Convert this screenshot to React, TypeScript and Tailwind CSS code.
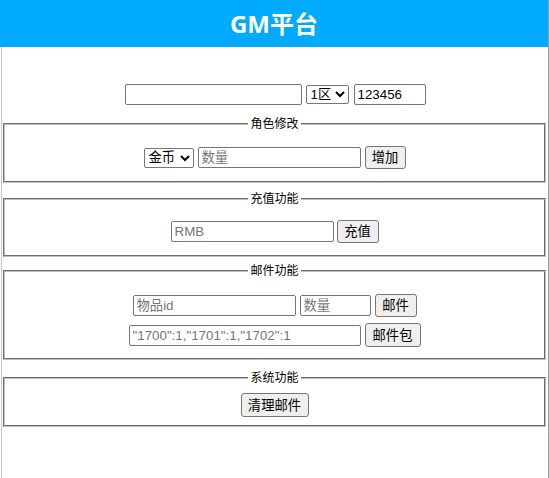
import React from "react";

const font = { fontFamily: '"Liberation Sans", "Noto Sans CJK SC", sans-serif' };

const inputCls =
  "h-[21px] border border-[#767676] rounded-[2px] bg-white px-[3px] text-[13.33px] leading-[15px] text-black placeholder:text-[#757575] outline-none";
const selectCls =
  "border border-[#767676] rounded-[2px] bg-white text-[13.33px] leading-[15px] text-black outline-none";
const btnCls =
  "border border-[#767676] rounded-[3px] bg-[#efefef] text-[13.33px] leading-[15px] text-black flex items-center justify-center";

function Box({
  title,
  className,
  children,
}: {
  title: string;
  className: string;
  children: React.ReactNode;
}) {
  return (
    <fieldset
      className={`ml-[1px] mr-[2px] border-2 [border-style:groove] border-[#c0c0c0] px-[10px] ${className}`}
    >
      <legend className="mx-auto px-[2px] text-[12px] leading-[16px] text-black">{title}</legend>
      {children}
    </fieldset>
  );
}

export default function App() {
  return (
    <div className="w-[549px] min-h-[478px] border-r border-[#9a9a9a] bg-white flex flex-col" style={font}>
      <div className="h-[47px] bg-[#00aaff] flex items-center justify-center">
        <h1 className="text-white text-[24px] font-bold leading-[30px]" style={{ fontFamily: '"Open Sans", "Noto Sans CJK SC", sans-serif' }}>
          GM平台
        </h1>
      </div>
      <div className="ml-[1px] flex-1 border-l border-[#c8c8c8] pt-[37px] flex flex-col">
        <div className="flex items-center justify-center gap-[4px]">
          <input className={`${inputCls} w-[177px]`} />
          <select className={`${selectCls} w-[43px] h-[19px]`} defaultValue="1">
            <option value="1">1区</option>
            <option value="2">2区</option>
          </select>
          <input className={`${inputCls} w-[72px] ml-[1px]`} defaultValue="123456" />
        </div>

        <Box title="角色修改" className="mt-[11px] pt-[14px] pb-[12px]">
          <div className="flex items-center justify-center gap-[4px]">
            <select className={`${selectCls} w-[50px] h-[20px]`} defaultValue="gold">
              <option value="gold">金币</option>
              <option value="diamond">钻石</option>
            </select>
            <input className={`${inputCls} w-[163px]`} placeholder="数量" />
            <button className={`${btnCls} w-[41px] h-[23px]`}>增加</button>
          </div>
        </Box>

        <Box title="充值功能" className="mt-[8px] pt-[13px] pb-[12px]">
          <div className="flex items-center justify-center gap-[3px]">
            <input className={`${inputCls} w-[163px]`} placeholder="RMB" />
            <button className={`${btnCls} w-[42px] h-[23px]`}>充值</button>
          </div>
        </Box>

        <Box title="邮件功能" className="mt-[6px] pt-[15px] pb-[11px]">
          <div className="flex flex-col items-center gap-[6px]">
            <div className="flex items-center justify-center gap-[4px]">
              <input className={`${inputCls} w-[163px]`} placeholder="物品id" />
              <input className={`${inputCls} w-[71px]`} placeholder="数量" />
              <button className={`${btnCls} w-[42px] h-[23px]`}>邮件</button>
            </div>
            <div className="flex items-center justify-center gap-[4px]">
              <input
                className={`${inputCls} w-[232px]`}
                placeholder={'"1700":1,"1701":1,"1702":1'}
              />
              <button className={`${btnCls} w-[56px] h-[24px]`}>邮件包</button>
            </div>
          </div>
        </Box>

        <Box title="系统功能" className="mt-[10px] pt-[7px] pb-[8px]">
          <div className="flex items-center justify-center">
            <button className={`${btnCls} w-[68px] h-[24px]`}>清理邮件</button>
          </div>
        </Box>
      </div>
    </div>
  );
}
